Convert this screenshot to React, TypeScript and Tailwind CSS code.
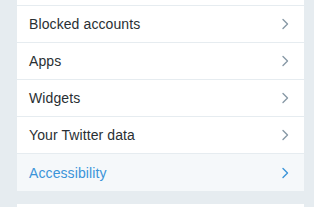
import React from "react";

const Chevron = ({ color }: { color: string }) => (
  <svg width="9" height="12" viewBox="0 0 9 12" fill="none">
    <path d="M2 1.5 L6.5 6 L2 10.5" stroke={color} strokeWidth="1.4" strokeLinecap="round" strokeLinejoin="round" />
  </svg>
);

const rows = [
  { label: "Blocked accounts" },
  { label: "Apps" },
  { label: "Widgets" },
  { label: "Your Twitter data" },
  { label: "Accessibility", active: true },
];

export default function App() {
  return (
    <div className="w-[314px] h-[207px] bg-[#e6ecf0] overflow-hidden" style={{ fontFamily: '"Liberation Sans", Arial, sans-serif' }}>
      <div className="mx-[17px] w-[287px] bg-white">
        <div className="h-[6px] border-b border-[#e6ecf0]" />
        {rows.map((r, i) => (
          <div
            key={r.label}
            className={`flex items-center justify-between h-[37px] pl-[12px] pr-[14px] ${i < rows.length - 1 ? "border-b border-[#e6ecf0]" : ""} ${r.active ? "bg-[#f5f8fa] text-[#3b94d9]" : "text-[#292f33]"}`}
          >
            <span className="text-[14px] leading-none tracking-[0.1px]">{r.label}</span>
            <Chevron color={r.active ? "#3b94d9" : "#8899a6"} />
          </div>
        ))}
      </div>
      <div className="mx-[17px] w-[287px] mt-[13px] h-[20px] bg-white" />
    </div>
  );
}
